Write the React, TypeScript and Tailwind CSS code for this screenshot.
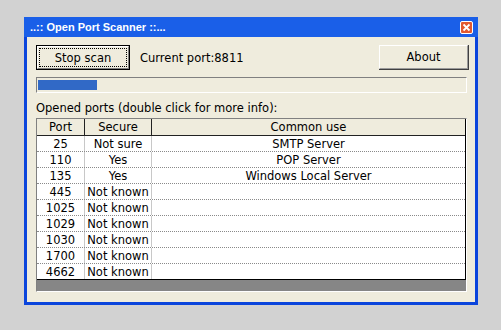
import React from "react";

const rows: [string, string, string][] = [
  ["25", "Not sure", "SMTP Server"],
  ["110", "Yes", "POP Server"],
  ["135", "Yes", "Windows Local Server"],
  ["445", "Not known", ""],
  ["1025", "Not known", ""],
  ["1029", "Not known", ""],
  ["1030", "Not known", ""],
  ["1700", "Not known", ""],
  ["4662", "Not known", ""],
];

export default function App() {
  return (
    <div
      className="w-[501px] h-[330px] bg-[#d2d2d2] pt-[17px] pl-[24px] text-black"
      style={{ fontFamily: '"DejaVu Sans", Verdana, sans-serif' }}
    >
      <div className="w-[454px] h-[288px] flex flex-col bg-[#0b45dc]">
        {/* title bar */}
        <div className="h-[20px] flex items-center justify-between pl-[6px] pr-[5px] bg-[#1a5fe8] shrink-0">
          <span
            className="text-white font-bold text-[11px] leading-[14px]"
            style={{ fontFamily: '"Liberation Sans", Arial, sans-serif' }}
          >
            ..:: Open Port Scanner ::...
          </span>
          <div className="w-[13px] h-[13px] rounded-[2px] border border-white bg-[#e2582f] flex items-center justify-center">
            <svg width="9" height="9" viewBox="0 0 9 9">
              <path d="M1.5 1.5 L7.5 7.5 M7.5 1.5 L1.5 7.5" stroke="white" strokeWidth="1.8" />
            </svg>
          </div>
        </div>
        {/* body */}
        <div className="flex-1 mx-[3px] mb-[3px] bg-[#efecdd] pl-[9px] pr-[8px] pt-[8px] flex flex-col text-[11.5px]">
          <div className="flex items-center h-[25px]">
            <div className="w-[94px] h-[25px] border border-black">
              <div className="w-full h-full border-t border-l border-white border-r border-b border-r-[#808080] border-b-[#808080] p-[1px]">
                <div className="w-full h-full border border-dotted border-black flex items-center justify-center leading-[14px]">
                  Stop scan
                </div>
              </div>
            </div>
            <span className="ml-[10px] leading-[14px]">Current port:8811</span>
            <div className="ml-auto -mr-[2px] w-[90px] h-[25px] border-r border-b border-[#404040]">
              <div className="w-full h-full border-t border-l border-white border-r border-b border-r-[#9a9a9a] border-b-[#9a9a9a] flex items-center justify-center leading-[14px]">
                About
              </div>
            </div>
          </div>
          <div className="mt-[7px] h-[16px] border-t border-l border-[#808080] border-r border-b border-r-white border-b-white pt-[2px] pb-[2px] pl-[1px]">
            <div className="w-[59px] h-full bg-[#3169c6]" />
          </div>
          <div className="mt-[8px] h-[14px] leading-[14px]">Opened ports (double click for more info):</div>
          <div className="mt-[3px] h-[174px] border-t border-l border-[#808080] border-r border-b border-r-white border-b-white flex flex-col">
            <div className="bg-white border-r border-b border-black flex flex-col">
              <div className="h-[17px] flex bg-[#efecdd] border-b border-[#222]">
                <div className="w-[48px] border-r border-[#222] flex items-center justify-center leading-[14px]">Port</div>
                <div className="w-[67px] border-r border-[#222] flex items-center justify-center leading-[14px]">Secure</div>
                <div className="flex-1 flex items-center justify-center leading-[14px]">Common use</div>
              </div>
              {rows.map(([p, s, c], i) => (
                <div
                  key={p}
                  className={
                    i < rows.length - 1
                      ? "h-[16px] flex border-b border-dotted border-[#8a8a8a]"
                      : "h-[15px] flex"
                  }
                >
                  <div className="w-[48px] border-r border-[#c8c8c8] flex items-center justify-center leading-[14px]">{p}</div>
                  <div className="w-[67px] border-r border-[#c8c8c8] flex items-center justify-center leading-[14px]">{s}</div>
                  <div className="flex-1 flex items-center justify-center leading-[14px]">{c}</div>
                </div>
              ))}
            </div>
            <div className="flex-1 bg-[#868686]" />
          </div>
        </div>
      </div>
    </div>
  );
}
